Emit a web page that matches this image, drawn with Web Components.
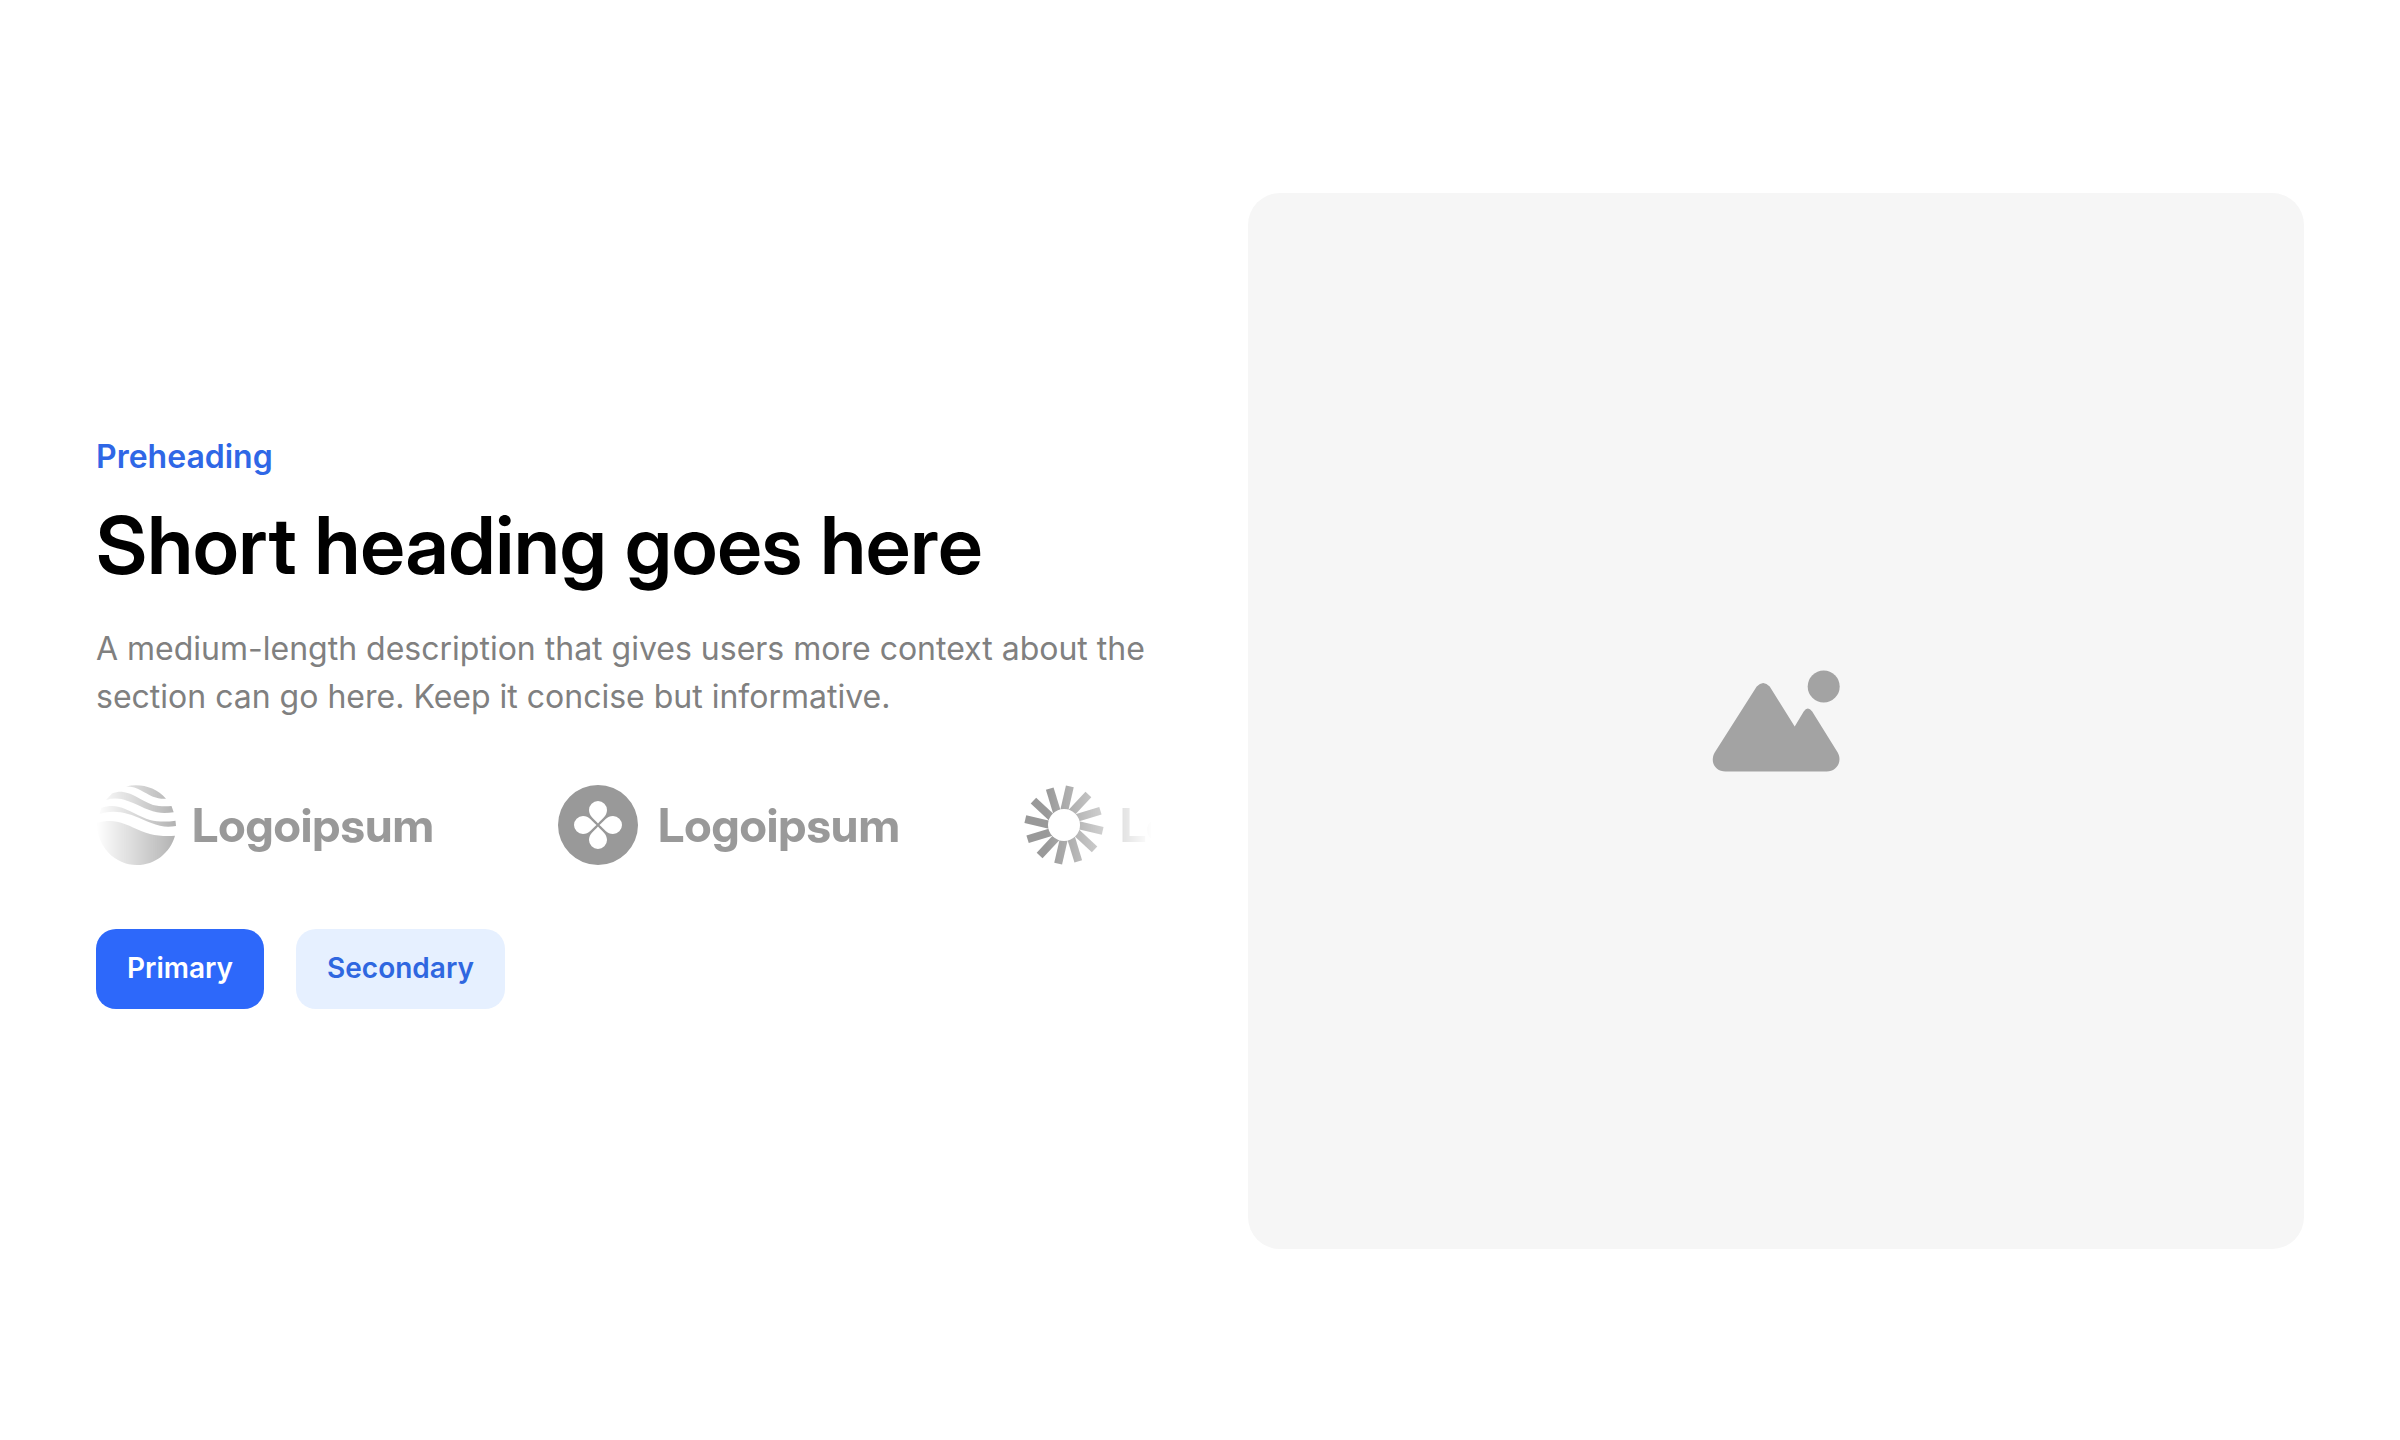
<!DOCTYPE html>
<html lang="en">
<head>
<meta charset="utf-8">
<meta name="viewport" content="width=device-width, initial-scale=1">
<title>Short heading goes here</title>
<style>
  body {
    margin: 0;
    background: #fff;
    font-family: Inter, "Liberation Sans", sans-serif;
  }
</style>
</head>
<body>
<hero-section>
  <span slot="preheading">Preheading</span>
  <span slot="heading">Short heading goes here</span>
  <span slot="description">A medium-length description that gives users more context about the section can go here. Keep it concise but informative.</span>
  <logo-strip slot="logos">
    <brand-logo mark="waves">Logoipsum</brand-logo>
    <brand-logo mark="clover">Logoipsum</brand-logo>
    <brand-logo mark="rays">Logoipsum</brand-logo>
  </logo-strip>
  <action-button slot="actions">Primary</action-button>
  <action-button slot="actions" variant="secondary">Secondary</action-button>
  <image-placeholder slot="media"></image-placeholder>
</hero-section>

<script>
class HeroSection extends HTMLElement {
  constructor() {
    super();
    this.attachShadow({ mode: "open" });
  }

  static get styles() {
    return /* css */`
      :host {
        display: block;
      }

      section {
        display: grid;
        grid-template-columns: 1fr 1fr;
        align-items: center;
        gap: 96px;
        padding: 193px 96px 191px;
      }

      .content {
        display: flex;
        flex-direction: column;
        min-width: 0;
      }

      p, h1 {
        margin: 0;
      }

      .preheading {
        color: #2f67e6;
        font-size: 32px;
        font-weight: 600;
        line-height: 48px;
      }

      h1 {
        margin: 16px 0 32px;
        color: #000;
        font-family: "Inter Display", Inter, "Liberation Sans", sans-serif;
        font-size: 80px;
        font-weight: 600;
        line-height: 96px;
      }

      .description {
        color: #808080;
        font-size: 32px;
        line-height: 48px;
      }

      .logos {
        margin: 64px 0;
      }

      .actions {
        display: flex;
        gap: 32px;
      }
    `;
  }

  connectedCallback() {
    this.render();
  }

  render() {
    this.shadowRoot.innerHTML = /* html */`
    <style>${HeroSection.styles}</style>
    <section>
      <div class="content">
        <p class="preheading"><slot name="preheading"></slot></p>
        <h1><slot name="heading"></slot></h1>
        <p class="description"><slot name="description"></slot></p>
        <div class="logos"><slot name="logos"></slot></div>
        <div class="actions"><slot name="actions"></slot></div>
      </div>
      <slot name="media"></slot>
    </section>`;
  }
}

class LogoStrip extends HTMLElement {
  constructor() {
    super();
    this.attachShadow({ mode: "open" });
  }

  static get styles() {
    return /* css */`
      :host {
        display: flex;
        gap: 124px;
        overflow: hidden;
        mask-image: linear-gradient(to right, transparent, #000 10%, #000 90%, transparent);
      }
    `;
  }

  connectedCallback() {
    this.shadowRoot.innerHTML = /* html */`
    <style>${LogoStrip.styles}</style>
    <slot></slot>`;
  }
}

class BrandLogo extends HTMLElement {
  constructor() {
    super();
    this.attachShadow({ mode: "open" });
  }

  static get styles() {
    return /* css */`
      :host {
        display: flex;
        flex: none;
        align-items: center;
        gap: 16px;
        color: #999;
        font-family: "Inter Display", Inter, "Liberation Sans", sans-serif;
        font-size: 47px;
        font-weight: 700;
        line-height: 80px;
      }

      :host([mark="clover"]) {
        gap: 20px;
      }

      svg {
        flex: none;
        width: 80px;
        height: 80px;
        fill: currentColor;
      }
    `;
  }

  static get marks() {
    return {
      waves: /* html */`
        <g transform="translate(1 0)">
          <path d="M29 1.500C43 -2 59 2 69 13.700C64 14 60 13 56 11.700C47 8 40 1 29 1.500Z"/>
          <path d="M15 8.500C19 7 23 6.500 26 7C36 8 43 15 56 20C62 21.500 69 21.500 74.500 21L76.700 27.300C71 28 65 28.300 60 27.300C49 25 37 17.500 30 15.700C23 13 16 13 9 15Z"/>
          <path d="M4.500 23C10 21 16 20.500 21 21.700C32 24 43 32 53 35C61 37 70 37 78.500 35.700L79 41C73 42 68 42 63 40.700C51 38 41 31.500 31 29C21 26 12 26 2.500 29Z"/>
          <path d="M0 38C7 36 14 35.500 20 36.700C31 39 42 46 53 49C61 51 70 51.500 78 50.700C73 68 58 80 40 80C18 80 0 62 0 38Z"/>
        </g>`,
      clover: /* html */`
        <path fill-rule="evenodd" d="M40 0A40 40 0 1 0 40 80A40 40 0 1 0 40 0ZM40 38.500C36 34 31 31 31 25A9 9 0 0 1 49 25C49 31 44 34 40 38.500ZM41.500 40C46 36 49 31 55 31A9 9 0 0 1 55 49C49 49 46 44 41.500 40ZM40 41.500C44 46 49 49 49 55A9 9 0 0 1 31 55C31 49 36 46 40 41.500ZM38.500 40C34 44 31 49 25 49A9 9 0 0 1 25 31C31 31 34 36 38.500 40Z"/>`,
      rays: /* html */`
        ${BrandLogo.rays()}
        <circle cx="40" cy="40" r="16" fill="#fff"/>`
    };
  }

  // twelve bars, each set a little off the radius so that the burst seems to turn
  static rays() {
    let out = "";
    for (let i = 0; i < 12; i++) {
      out += `<rect x="-7" y="-39" width="8" height="25" transform="translate(40 40) rotate(${i * 30 + 13})"/>`;
    }
    return out;
  }

  connectedCallback() {
    this.shadowRoot.innerHTML = /* html */`
    <style>${BrandLogo.styles}</style>
    <svg viewBox="0 0 80 80" aria-hidden="true">${BrandLogo.marks[this.getAttribute("mark")]}</svg>
    <slot></slot>`;
  }
}

class ActionButton extends HTMLElement {
  constructor() {
    super();
    this.attachShadow({ mode: "open" });
  }

  static get styles() {
    return /* css */`
      :host {
        display: block;
      }

      button {
        padding: 19px 31px 21px;
        border: 0;
        border-radius: 20px;
        background: #2d68fa;
        color: #fff;
        font: 600 28px/40px Inter, "Liberation Sans", sans-serif;
        cursor: pointer;
      }

      :host([variant="secondary"]) button {
        background: #e6f0ff;
        color: #2f67e0;
      }
    `;
  }

  connectedCallback() {
    this.shadowRoot.innerHTML = /* html */`
    <style>${ActionButton.styles}</style>
    <button type="button"><slot></slot></button>`;
  }
}

class ImagePlaceholder extends HTMLElement {
  constructor() {
    super();
    this.attachShadow({ mode: "open" });
  }

  static get styles() {
    return /* css */`
      :host {
        display: grid;
        place-items: center;
        aspect-ratio: 1;
        border-radius: 32px;
        background: #f6f6f6;
      }

      svg {
        width: 128px;
        height: 104px;
        fill: #a3a3a3;
      }
    `;
  }

  connectedCallback() {
    this.shadowRoot.innerHTML = /* html */`
    <style>${ImagePlaceholder.styles}</style>
    <svg viewBox="-0.7 -0.5 128 104" aria-hidden="true">
      <circle cx="111" cy="17" r="16"/>
      <path d="M44 17Q50.500 10 57 17L82 57L91 42Q95 36 99.500 42L125 83C130 92 124 102 114 102H13C2 102 -3 92 2 83Z"/>
    </svg>`;
  }
}

customElements.define("hero-section", HeroSection);
customElements.define("logo-strip", LogoStrip);
customElements.define("brand-logo", BrandLogo);
customElements.define("action-button", ActionButton);
customElements.define("image-placeholder", ImagePlaceholder);
</script>
</body>
</html>
